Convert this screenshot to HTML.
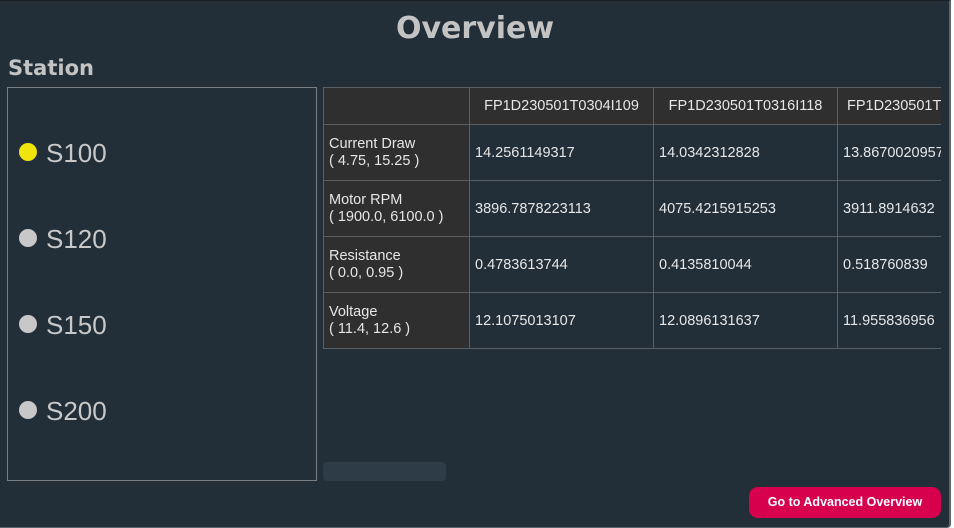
<!DOCTYPE html>
<html><head><style>
body{margin:0;width:954px;height:528px;background:#fff;overflow:hidden;font-family:"DejaVu Sans","Liberation Sans",sans-serif;}
#app{position:absolute;left:0;top:0;width:949px;height:526px;background:#232f38;border-top:1px solid #1a1f24;border-right:2px solid #5a6670;border-bottom:1px solid #5a6670;border-bottom-right-radius:4px;}
h1{position:absolute;left:0;width:950px;top:10px;margin:0;text-align:center;font-size:30px;font-weight:bold;color:#c3c3c3;}
h2{position:absolute;left:8px;top:55px;margin:0;font-size:21px;font-weight:bold;color:#c3c3c3;}
#st{position:absolute;left:7px;top:86px;width:308px;height:392px;border:1px solid #7a7f84;}
.s{position:absolute;left:11px;font-size:25px;color:#c8c8c8;font-family:"Liberation Sans",sans-serif;font-size:26px;}
.s i{display:inline-block;width:18px;height:18px;border-radius:50%;background:#c8c8c8;margin-right:9px;vertical-align:1px;}
#tw{position:absolute;left:323px;top:86px;width:618px;height:262px;overflow:hidden;font-family:"Liberation Sans",sans-serif;}
table{border-collapse:collapse;font-size:14.5px;color:#e6e6e6;table-layout:fixed;width:720px;}
td,th{border:1px solid #5a5f63;padding:0 5px;font-weight:normal;text-align:left;white-space:nowrap;overflow:hidden;}
th{height:36px;background:#2f2f2f;text-align:center;}
th.lft{text-align:left;padding-left:9px;}
td{height:55px;}
td.l{background:#2f2f2f;line-height:17px;}
#sb{position:absolute;left:323px;top:461px;width:123px;height:19px;background:#2e3c47;border-radius:4px;}
#btn{position:absolute;left:749px;top:486px;width:192px;height:31px;background:#d6004c;border-radius:9px;color:#fff;font-weight:bold;font-size:12.5px;text-align:center;line-height:31px;font-family:"Liberation Sans",sans-serif;}
</style></head><body><div id="app">
<h1>Overview</h1>
<h2>Station</h2>
<div id="st">
<div class="s" style="top:50px"><i style="background:#f1e30c"></i>S100</div>
<div class="s" style="top:136px"><i></i>S120</div>
<div class="s" style="top:222px"><i></i>S150</div>
<div class="s" style="top:308px"><i></i>S200</div>
</div>
<div id="tw"><table>
<colgroup><col style="width:146px"><col style="width:184px"><col style="width:184px"><col style="width:206px"></colgroup>
<tr><th></th><th>FP1D230501T0304I109</th><th>FP1D230501T0316I118</th><th class="lft">FP1D230501T0325I120</th></tr>
<tr><td class="l">Current Draw<br>( 4.75, 15.25 )</td><td>14.2561149317</td><td>14.0342312828</td><td>13.8670020957</td></tr>
<tr><td class="l">Motor RPM<br>( 1900.0, 6100.0 )</td><td>3896.7878223113</td><td>4075.4215915253</td><td>3911.8914632</td></tr>
<tr><td class="l">Resistance<br>( 0.0, 0.95 )</td><td>0.4783613744</td><td>0.4135810044</td><td>0.518760839</td></tr>
<tr><td class="l">Voltage<br>( 11.4, 12.6 )</td><td>12.1075013107</td><td>12.0896131637</td><td>11.955836956</td></tr>
</table></div>
<div id="sb"></div>
<div id="btn">Go to Advanced Overview</div>
</div></body></html>
